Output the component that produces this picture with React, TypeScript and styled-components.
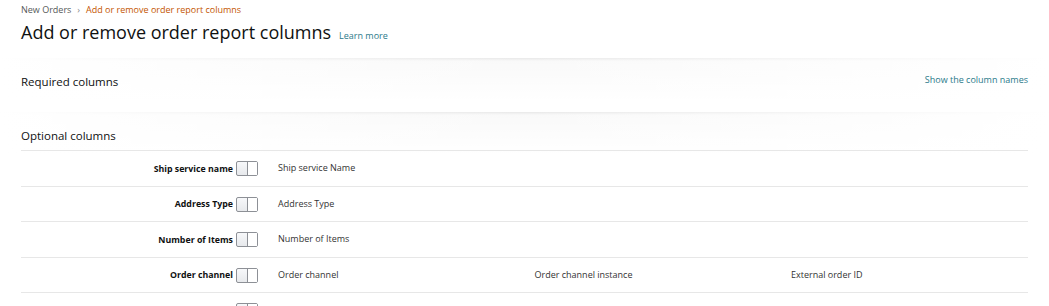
import styled, { createGlobalStyle } from "styled-components";

const GlobalStyle = createGlobalStyle`
  body {
    margin: 0;
    background: #fff;
    font-family: "Open Sans", "Noto Sans", Arial, sans-serif;
    color: #0f1111;
  }
`;

const Page = styled.div`
  padding: 0 21px;
  width: 1049px;
  box-sizing: border-box;
`;

const Crumbs = styled.div`
  display: flex;
  align-items: center;
  gap: 6px;
  padding-top: 3px;
  font-size: 9px;
  line-height: 14px;
  color: #565959;
`;

const CrumbSep = styled.span`
  font-size: 9px;
  color: #888;
`;

const CrumbCurrent = styled.span`
  color: #c45500;
`;

const TitleRow = styled.div`
  display: flex;
  align-items: baseline;
  gap: 8px;
  margin-top: 2px;
  margin-bottom: 13px;
`;

const Title = styled.h1`
  margin: 0;
  font-size: 18px;
  font-weight: 400;
  line-height: 26px;
  color: #0f1111;
`;

const Link = styled.a`
  color: #2a7a8a;
  font-size: 9px;
  text-decoration: none;
`;

const Divider = styled.div`
  height: 44px;
  margin: 0 -21px -30px;
  background: linear-gradient(
    to bottom,
    rgba(0, 0, 0, 0.09),
    rgba(0, 0, 0, 0.025) 3px,
    transparent
  );
  &::after {
    content: "";
    display: block;
    height: 44px;
    background: linear-gradient(
      to right,
      #fff,
      rgba(255, 255, 255, 0) 50%,
      #fff
    );
  }
`;

const SectionHead = styled.div<{ $pad: number }>`
  position: relative;
  z-index: 1;
  display: flex;
  justify-content: space-between;
  align-items: center;
  line-height: 20px;
  padding-bottom: ${(p) => p.$pad}px;
`;

const SectionTitle = styled.h2`
  margin: 0;
  font-size: 11.5px;
  font-weight: 400;
  color: #0f1111;
`;

const HeadLink = styled(Link)`
  margin-top: -4px;
`;

const Rows = styled.div`
  margin-top: 4px;
  border-top: 1px solid #e7e7e7;
`;

const Row = styled.div`
  display: grid;
  grid-template-columns: 237px 256.5px 256.5px 256.5px;
  align-items: center;
  height: 35.5px;
  box-sizing: border-box;
  border-bottom: 1px solid #e7e7e7;
`;

const LabelCell = styled.div`
  display: flex;
  justify-content: flex-end;
  align-items: center;
  gap: 3px;
  padding-top: 1px;
  font-size: 8.8px;
  font-weight: 700;
  color: #0f1111;
`;

const Toggle = styled.span`
  position: relative;
  display: inline-block;
  width: 20px;
  height: 13px;
  border: 1px solid #8d9096;
  border-radius: 2px;
  background: linear-gradient(to bottom, #f7f8fa, #e7e9ec);
  &::after {
    content: "";
    position: absolute;
    top: 0;
    bottom: 0;
    right: 0;
    width: 9px;
    border-left: 1px solid #8d9096;
    background: #fff;
  }
`;

const Name = styled.div`
  padding-left: 20px;
  padding-bottom: 1px;
  font-size: 9px;
  color: #333;
`;

const optional = [
  { label: "Ship service name", names: ["Ship service Name"] },
  { label: "Address Type", names: ["Address Type"] },
  { label: "Number of Items", names: ["Number of Items"] },
  {
    label: "Order channel",
    names: ["Order channel", "Order channel instance", "External order ID"],
  },
  { label: "", names: [] },
];

export default function App() {
  return (
    <>
      <GlobalStyle />
      <Page>
        <Crumbs>
          <span>New Orders</span>
          <CrumbSep>›</CrumbSep>
          <CrumbCurrent>Add or remove order report columns</CrumbCurrent>
        </Crumbs>
        <TitleRow>
          <Title>Add or remove order report columns</Title>
          <Link href="#">Learn more</Link>
        </TitleRow>
        <Divider />
        <SectionHead $pad={20}>
          <SectionTitle>Required columns</SectionTitle>
          <HeadLink href="#">Show the column names</HeadLink>
        </SectionHead>
        <Divider />
        <SectionHead $pad={0}>
          <SectionTitle>Optional columns</SectionTitle>
        </SectionHead>
        <Rows>
          {optional.map((r, i) => (
            <Row key={i}>
              <LabelCell>
                {r.label}
                <Toggle />
              </LabelCell>
              {r.names.map((n) => (
                <Name key={n}>{n}</Name>
              ))}
            </Row>
          ))}
        </Rows>
      </Page>
    </>
  );
}
